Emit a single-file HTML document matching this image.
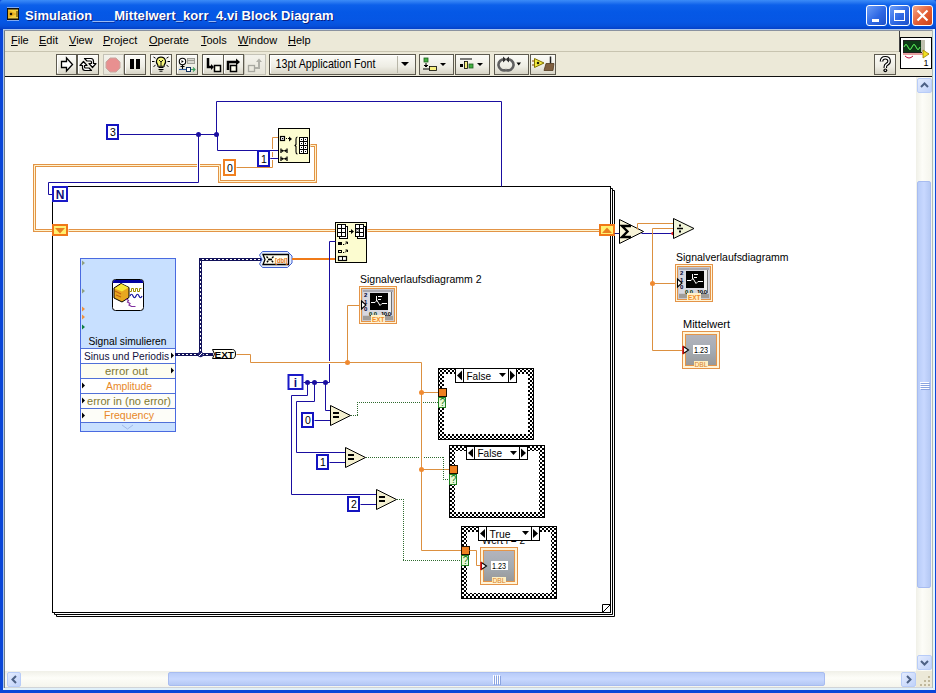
<!DOCTYPE html>
<html><head><meta charset="utf-8">
<style>
*{box-sizing:border-box}
html,body{margin:0;padding:0;width:936px;height:693px;overflow:hidden;background:#fff;font-family:"Liberation Sans",sans-serif}
.abs{position:absolute}
#frame{position:absolute;left:0;top:0;width:936px;height:693px;background:#0A46D8}
#title{position:absolute;left:0;top:0;width:936px;height:30px;
 background:linear-gradient(#3A8CF8 0px,#2B7BF2 2px,#0C60EA 5px,#0558E6 12px,#0656E4 22px,#0650DA 26px,#0440C8 29px,#0036B0 30px);
 border-radius:3px 3px 0 0}
#ttext{position:absolute;left:25px;top:8px;letter-spacing:0.08px;color:#fff;font-weight:bold;font-size:13px;white-space:nowrap;text-shadow:1px 1px 0 #0A1E80}
.tbtn{position:absolute;top:5px;width:21px;height:21px;border:1px solid #fff;border-radius:3px;
 background:linear-gradient(135deg,#6C9EF8,#2E68E4 55%,#1E50C8)}
#menu{position:absolute;left:5px;top:30px;width:927px;height:22px;background:#ECE9D8}
.mi{position:absolute;top:4px;font-size:11px;color:#000;white-space:nowrap}
#tool{position:absolute;left:5px;top:52px;width:927px;height:25px;background:#ECE9D8}
#canvas{position:absolute;left:5px;top:77px;width:911px;height:594px;background:#fff}
#vs{position:absolute;left:916px;top:77px;width:16px;height:594px;background:linear-gradient(90deg,#F0F0E8,#FDFDF8 40%,#F4F4EC)}
#hs{position:absolute;left:5px;top:671px;width:911px;height:17px;background:linear-gradient(#F0F0E8,#FDFDF8 40%,#F4F4EC)}
#grip{position:absolute;left:916px;top:671px;width:16px;height:17px;background:#ECE9D8}
.sbtn{position:absolute;border:1px solid #B8CCF8;border-radius:2px;background:linear-gradient(135deg,#E4ECFE,#C0D2FA)}
.thumb{position:absolute;border:1px solid #A8BCF0;border-radius:2px}
svg{position:absolute;left:0;top:0}
</style></head><body>
<div id="frame"></div>
<div id="title">
 <svg width="14" height="14" style="left:6px;top:7px"><rect x="1" y="1" width="12" height="12" fill="#101010"/><rect x="2" y="2.5" width="10" height="9" fill="#F4D040"/><path d="M2,3 L11,7 L2,11z" fill="#E8B020"/><path d="M11,4 v6" stroke="#403000"/><path d="M5,5.5 l1.5,1.5 l-1.5,1.5 l-1.5,-1.5z" fill="#000"/><path d="M1.5,0.5 h11 M1.5,13.5 h11" stroke="#fff" stroke-dasharray="1,1"/></svg>
 <div id="ttext">Simulation___Mittelwert_korr_4.vi Block Diagram</div>
 <div class="tbtn" style="left:866px"><div class="abs" style="left:5px;top:13px;width:7px;height:3px;background:#fff"></div></div>
 <div class="tbtn" style="left:889px"><div class="abs" style="left:4px;top:4px;width:11px;height:11px;border:1px solid #fff;border-top-width:3px"></div></div>
 <div class="tbtn" style="left:912px;background:linear-gradient(135deg,#F4A888,#E35B32 55%,#CC4418)"><svg width="19" height="19" style="left:0;top:0"><path d="M4.5,4.5 L14.5,14.5 M14.5,4.5 L4.5,14.5" stroke="#fff" stroke-width="2.2"/></svg></div>
</div>
<div id="menu">
 <span class="mi" style="left:6px"><u>F</u>ile</span>
 <span class="mi" style="left:34px"><u>E</u>dit</span>
 <span class="mi" style="left:64px"><u>V</u>iew</span>
 <span class="mi" style="left:98px"><u>P</u>roject</span>
 <span class="mi" style="left:144px"><u>O</u>perate</span>
 <span class="mi" style="left:196px"><u>T</u>ools</span>
 <span class="mi" style="left:233px"><u>W</u>indow</span>
 <span class="mi" style="left:283px"><u>H</u>elp</span>
 <div class="abs" style="left:0;top:21px;width:894px;height:1px;background:#C8C4B0"></div>
 <div class="abs" style="left:894px;top:0;width:1px;height:47px;background:#404040"></div>
</div>
<div id="tool"><div class="abs" style="left:0;top:24px;width:928px;height:1px;background:#101010"></div></div>
<div id="canvas"></div>
<div id="vs">
 <div class="sbtn" style="left:1px;top:1px;width:15px;height:15px"><svg width="13" height="13" style="left:0;top:0"><path d="M3,8 L6.5,4.5 L10,8" fill="none" stroke="#4D6185" stroke-width="2"/></svg></div>
 <div class="thumb" style="left:1px;top:104px;width:14px;height:407px;background:linear-gradient(90deg,#B8CCF8,#C8D8FF 50%,#B4C8F4)"><svg width="10" height="12" style="left:2px;top:199px"><path d="M0,1.5 h9 M0,3.5 h9 M0,5.5 h9 M0,7.5 h9" stroke="#fff"/><path d="M1,2.5 h9 M1,4.5 h9 M1,6.5 h9 M1,8.5 h9" stroke="#8AA4E0"/></svg></div>
 <div class="sbtn" style="left:1px;top:578px;width:15px;height:15px"><svg width="13" height="13" style="left:0;top:0"><path d="M3,5 L6.5,8.5 L10,5" fill="none" stroke="#4D6185" stroke-width="2"/></svg></div>
</div>
<div id="hs">
 <div class="sbtn" style="left:2px;top:1px;width:14px;height:15px"><svg width="13" height="13" style="left:0;top:0"><path d="M8,3 L4.5,6.5 L8,10" fill="none" stroke="#4D6185" stroke-width="2"/></svg></div>
 <div class="thumb" style="left:163px;top:1px;width:657px;height:14px;background:linear-gradient(#B8CCF8,#C8D8FF 50%,#B4C8F4)"><svg width="12" height="10" style="left:323px;top:2px"><path d="M1.5,0 v9 M3.5,0 v9 M5.5,0 v9 M7.5,0 v9" stroke="#fff"/><path d="M2.5,1 v9 M4.5,1 v9 M6.5,1 v9 M8.5,1 v9" stroke="#8AA4E0"/></svg></div>
 <div class="sbtn" style="left:896px;top:1px;width:15px;height:15px"><svg width="13" height="13" style="left:0;top:0"><path d="M5,3 L8.5,6.5 L5,10" fill="none" stroke="#4D6185" stroke-width="2"/></svg></div>
</div>
<div id="grip"><svg width="16" height="17" style="left:0;top:0"><g fill="#C0B89C"><rect x="12" y="5" width="2" height="2"/><rect x="12" y="9" width="2" height="2"/><rect x="12" y="13" width="2" height="2"/><rect x="8" y="9" width="2" height="2"/><rect x="8" y="13" width="2" height="2"/><rect x="4" y="13" width="2" height="2"/></g></svg></div>
<div class="abs" style="left:3px;top:29px;width:1px;height:660px;background:#A8C4EC"></div>
<div class="abs" style="left:4px;top:30px;width:1px;height:658px;background:#707C84"></div>
<div class="abs" style="left:3px;top:29px;width:930px;height:1px;background:#A8C4EC"></div>
<div class="abs" style="left:4px;top:30px;width:928px;height:1px;background:#8A92A0"></div>
<div class="abs" style="left:932px;top:30px;width:1px;height:659px;background:#B0BCB8"></div>
<div class="abs" style="left:933px;top:29px;width:2px;height:660px;background:#E4F6FF"></div>
<div class="abs" style="left:5px;top:687px;width:927px;height:1px;background:#D0D4D8"></div><div class="abs" style="left:3px;top:688px;width:932px;height:2px;background:#E0F0FA"></div>
<svg width="936" height="693" viewBox="0 0 936 693" font-family="Liberation Sans, sans-serif">
<defs>
<linearGradient id="bg" x1="0" y1="0" x2="0" y2="1"><stop offset="0" stop-color="#FCFCF8"/><stop offset=".6" stop-color="#EEEDE4"/><stop offset="1" stop-color="#D6D3C4"/></linearGradient>
<linearGradient id="bgd" x1="0" y1="0" x2="0" y2="1"><stop offset="0" stop-color="#F4F3EC"/><stop offset="1" stop-color="#E6E4D8"/></linearGradient>
<linearGradient id="gind" x1="0" y1="0" x2="0" y2="1"><stop offset="0" stop-color="#b4b4bc"/><stop offset=".5" stop-color="#a4acb4"/><stop offset="1" stop-color="#989898"/></linearGradient>
<pattern id="chk" x="0" y="0" width="4" height="4" patternUnits="userSpaceOnUse"><rect width="4" height="4" fill="#000"/><rect x="0" y="0" width="2" height="2" fill="#fff"/><rect x="2" y="2" width="2" height="2" fill="#fff"/></pattern>
</defs>
<rect x="56.5" y="54.5" width="20" height="20" fill="url(#bg)" stroke="#5e5b50"/>
<path d="M57.5,73 V55.5 H75" fill="none" stroke="#fff"/>
<rect x="77.5" y="54.5" width="21" height="20" fill="url(#bg)" stroke="#5e5b50"/>
<path d="M78.5,73 V55.5 H97" fill="none" stroke="#fff"/>
<rect x="103.5" y="54.5" width="20" height="20" fill="url(#bgd)" stroke="#c4c2b6"/>
<rect x="124.5" y="54.5" width="21" height="20" fill="url(#bg)" stroke="#5e5b50"/>
<path d="M125.5,73 V55.5 H144" fill="none" stroke="#fff"/>
<rect x="150.5" y="54.5" width="21" height="20" fill="url(#bg)" stroke="#5e5b50"/>
<path d="M151.5,73 V55.5 H170" fill="none" stroke="#fff"/>
<rect x="176.5" y="54.5" width="21" height="20" fill="url(#bg)" stroke="#5e5b50"/>
<path d="M177.5,73 V55.5 H196" fill="none" stroke="#fff"/>
<rect x="202.5" y="54.5" width="21" height="20" fill="url(#bg)" stroke="#5e5b50"/>
<path d="M203.5,73 V55.5 H222" fill="none" stroke="#fff"/>
<rect x="223.5" y="54.5" width="20" height="20" fill="url(#bg)" stroke="#5e5b50"/>
<path d="M224.5,73 V55.5 H242" fill="none" stroke="#fff"/>
<rect x="244.5" y="54.5" width="21" height="20" fill="url(#bgd)" stroke="#c4c2b6"/>
<path d="M61.5,61.5 h5 v-3.5 l6,6.5 l-6,6.5 v-3.5 h-5 z" fill="#fff" stroke="#000" stroke-width="1.3"/>
<path d="M84.5,58.5 H91 Q93.5,58.5 93.5,61.5 V63.5 H96 L92.5,67.5 L89,63.5 H91.5 V62 Q91.5,61 90.5,61 H87 Z" fill="#fff" stroke="#000" stroke-width="1.2" stroke-linejoin="round"/>
<path d="M91.5,70.5 H85 Q82.5,70.5 82.5,67.5 V65.5 H80 L83.5,61.5 L87,65.5 H84.5 V67 Q84.5,68 85.5,68 H89 Z" fill="#fff" stroke="#000" stroke-width="1.2" stroke-linejoin="round"/>
<path d="M110,58 h6 l4,4 v6 l-4,4 h-6 l-4,-4 v-6 z" fill="#e89090" stroke="#c8a8a0"/>
<rect x="130" y="59" width="4" height="10" fill="#000"/><rect x="136" y="59" width="4" height="10" fill="#000"/>
<path d="M161,57 a4.6,4.6 0 0 1 3.2,7.9 v1.3 h-6.4 v-1.3 A4.6,4.6 0 0 1 161,57z" fill="#f4f47a" stroke="#000" stroke-width="1.1"/>
<path d="M159,60 l2,2 l2,-2 M161,62 v4" stroke="#000" fill="none" stroke-width=".9"/>
<path d="M158.5,67.5 h5 M158.5,69.5 h5" stroke="#000" stroke-width="1.2"/><path d="M159.5,71.2 h3" stroke="#000" stroke-width="1"/>
<path d="M152,61.5 h2.5 M167.5,61.5 h2.5 M153.5,57 l2,1.2 M168.5,57 l-2,1.2 M153.5,66.5 l2,-1.2 M168.5,66.5 l-2,-1.2" stroke="#000" stroke-width="1"/>
<circle cx="182.5" cy="61.5" r="3.2" fill="#fff" stroke="#000" stroke-width="1.1"/><path d="M181.5,60 l2.2,1.5 l-2.2,1.5z" fill="#000"/><path d="M182.5,64.7 v4.5 M180.5,66.5 h4" stroke="#000" stroke-width="1.1"/>
<rect x="187.5" y="58.5" width="7" height="5" fill="#d8d8d0" stroke="#a0a098"/><path d="M187.5,60.5 h7" stroke="#a0a098"/>
<path d="M179,69.5 h7" stroke="#2a5aa0" stroke-width="1.1"/><rect x="186.5" y="67.5" width="4" height="4" fill="#fff" stroke="#103060"/><path d="M191,69.5 h4 M193,67.5 l2,2 l-2,2" stroke="#40a060" fill="none" stroke-width="1.1"/>
<path d="M208,58 v9 h4" fill="none" stroke="#000" stroke-width="2.5"/><path d="M211,64 l3,3 l-3,3z" fill="#000"/><rect x="214.5" y="65.5" width="6" height="6" fill="#fffff0" stroke="#000" stroke-width="1.5"/>
<path d="M228,70 v-8 h8" fill="none" stroke="#000" stroke-width="2.5"/><path d="M236,58.5 l4,3.5 l-4,3.5z" fill="#000"/><rect x="230.5" y="65.5" width="6" height="6" fill="#fffff0" stroke="#000" stroke-width="1.5"/>
<rect x="248.5" y="65.5" width="6" height="6" fill="none" stroke="#a8a8a0" stroke-width="1.3"/><path d="M255,68 h4 v-6" fill="none" stroke="#b0b0a8" stroke-width="2"/><path d="M256,62 l3,-3.5 l3,3.5z" fill="#b0b0a8"/>
<rect x="269.5" y="54.5" width="146" height="20" fill="url(#bg)" stroke="#5e5b50"/>
<path d="M270.5,73 V55.5 H414" fill="none" stroke="#fff"/>
<path d="M397.5,56 v17" stroke="#b8b6a8"/><path d="M401,62 h8 l-4,4z" fill="#000"/>
<text x="275.5" y="67.5" font-size="12" fill="#000" textLength="100" lengthAdjust="spacingAndGlyphs">13pt Application Font</text>
<rect x="419.5" y="54.5" width="34" height="20" fill="url(#bg)" stroke="#5e5b50"/>
<rect x="424" y="58" width="4" height="4" fill="#40b040" stroke="#206020" stroke-width=".8"/><path d="M426,63 v4 M424,65 l2,2 l2,-2 M423,69 h9" stroke="#000"/><rect x="429.5" y="66.5" width="7" height="4" fill="#f8f080" stroke="#000" stroke-width=".8"/><path d="M440,63 h6 l-3,3z" fill="#000"/>
<rect x="455.5" y="54.5" width="34" height="20" fill="url(#bg)" stroke="#5e5b50"/>
<path d="M460,59 h12" stroke="#000"/><rect x="460" y="64" width="3" height="3" fill="#000"/><rect x="464.5" y="61.5" width="3" height="7" fill="#f8f080" stroke="#000" stroke-width=".8"/><rect x="469" y="64" width="4" height="4" fill="#40b040" stroke="#206020" stroke-width=".8"/><path d="M477,63 h6 l-3,3z" fill="#000"/>
<rect x="494.5" y="54.5" width="34" height="20" fill="url(#bg)" stroke="#5e5b50"/>
<path d="M505,59.5 a5.5,5.5 0 1 0 1,10.5 M507,59.5 a5.5,5.5 0 1 1 -1,10.5" fill="none" stroke="#606060" stroke-width="2.6"/><path d="M503,56.5 l3.5,3 l-3.5,3z M509,56.5 l-3.5,3 l3.5,3z" fill="#303030"/><path d="M516.5,62.5 h4.5 l-2.25,3z" fill="#000"/>
<rect x="530.5" y="54.5" width="25" height="20" fill="url(#bg)" stroke="#5e5b50"/>
<path d="M534.5,58.5 L544,63 L534.5,67.5z" fill="#f4ec40" stroke="#807000"/><path d="M536.5,63 l1.5,-1.5 l1.5,1.5 l-1.5,1.5z" fill="#000"/><path d="M532,61 h2 M532,65 h2" stroke="#804000"/><path d="M550.5,56.5 v7" stroke="#202020" stroke-width="1.5"/><path d="M546,63.5 h8 l-1,7 h-9z" fill="#806040" stroke="#503820" stroke-width=".8"/>
<rect x="874.5" y="54.5" width="21" height="20" fill="url(#bg)" stroke="#5e5b50"/>
<path d="M881.5,61.5 q0,-3.8 3.8,-3.8 q3.8,0 3.8,3.5 q0,2 -2.3,3.2 q-1.5,.8 -1.5,2.5 v1" fill="none" stroke="#000" stroke-width="3.6"/><path d="M881.5,61.5 q0,-3.8 3.8,-3.8 q3.8,0 3.8,3.5 q0,2 -2.3,3.2 q-1.5,.8 -1.5,2.5 v1" fill="none" stroke="#fff" stroke-width="1.4"/><circle cx="885.3" cy="70.3" r="1.9" fill="#000"/><circle cx="885.3" cy="70.3" r=".7" fill="#fff"/>
<rect x="900.5" y="37.5" width="31" height="31" fill="#fff" stroke="#000"/>
<rect x="903.5" y="40.5" width="18" height="12" fill="#0e3a16" stroke="#202020"/><path d="M904,47 q2,-5 4,0 t4,0 t4,0 t4,0" stroke="#60ff60" fill="none"/><rect x="921" y="40" width="4" height="12" fill="#c0c0b0"/><path d="M903,54 h26" stroke="#d04040"/><path d="M923,50 l6,4 l-6,4z" fill="#f0e020" stroke="#a08000" stroke-width=".8"/><path d="M905,56 q4,4 8,0" stroke="#c01040" fill="none"/><text x="928.5" y="66" font-size="9" text-anchor="end" fill="#000">1</text>
<rect x="52.5" y="186.5" width="558" height="426" fill="none" stroke="#000"/>
<path d="M610,188.5 H612.5 V614.5 H54.5 V612" fill="none" stroke="#000"/>
<path d="M612,190.5 H614.5 V616.5 H56.5 V614" fill="none" stroke="#000"/>
<path d="M602.5,612 V604.5 H610 M603,612 L610,605" fill="none" stroke="#000"/>
<path d="M119.5,134.5 L216.5,134.5" fill="none" stroke="#1a0ea0" stroke-width="1" />
<path d="M198.5,134.5 L198.5,182.5 L48.5,182.5 L48.5,194.5 L53.5,194.5" fill="none" stroke="#1a0ea0" stroke-width="1" />
<path d="M216.5,134.5 L216.5,101.5 L501.5,101.5 L501.5,186.5" fill="none" stroke="#1a0ea0" stroke-width="1" />
<path d="M216.5,134.5 L217.5,134.5 L217.5,150.5 L278.5,150.5" fill="none" stroke="#1a0ea0" stroke-width="1" />
<path d="M270.5,158.5 L278.5,158.5" fill="none" stroke="#1a0ea0" stroke-width="1" />
<circle cx="198.5" cy="134.5" r="2.5" fill="#1a0ea0"/>
<circle cx="216.5" cy="134.5" r="2.5" fill="#1a0ea0"/>
<path d="M236.5,167.5 L272.5,167.5 L272.5,137.5 L278.5,137.5" fill="none" stroke="#dc9040" stroke-width="1" />
<path d="M310.5,145.5 L315.5,145.5 L315.5,181.5 L219.5,181.5 L219.5,165.5 L34.5,165.5 L34.5,230.5 L52.5,230.5" fill="none" stroke="#e29446" stroke-width="3" stroke-linejoin="miter"/>
<path d="M310.5,145.5 L315.5,145.5 L315.5,181.5 L219.5,181.5 L219.5,165.5 L34.5,165.5 L34.5,230.5 L52.5,230.5" fill="none" stroke="#fff4d0" stroke-width="1"/>
<path d="M68.5,230.5 L335.5,230.5" fill="none" stroke="#e29446" stroke-width="3" stroke-linejoin="miter"/>
<path d="M68.5,230.5 L335.5,230.5" fill="none" stroke="#fff4d0" stroke-width="1"/>
<path d="M367.5,230.5 L599.5,230.5" fill="none" stroke="#e29446" stroke-width="3" stroke-linejoin="miter"/>
<path d="M367.5,230.5 L599.5,230.5" fill="none" stroke="#fff4d0" stroke-width="1"/>
<rect x="107" y="125" width="11" height="14" fill="#fff" stroke="#1414c0" stroke-width="2"/>
<text x="113.0" y="136" font-size="10.5" text-anchor="middle" fill="#000">3</text>
<rect x="258" y="151" width="11" height="15" fill="#fff" stroke="#1414c0" stroke-width="2"/>
<text x="264.0" y="163" font-size="10.5" text-anchor="middle" fill="#000">1</text>
<rect x="224" y="160" width="11" height="15" fill="#fff" stroke="#f08020" stroke-width="2"/>
<text x="230.0" y="172" font-size="10.5" text-anchor="middle" fill="#000">0</text>
<rect x="278.5" y="128.5" width="31" height="34" fill="#fcfcd0" stroke="#000"/>
<rect x="280.5" y="136.5" width="4" height="4" fill="#fff" stroke="#000" stroke-width="1.2"/><rect x="282" y="138" width="1.2" height="1.2" fill="#000"/><rect x="286" y="138" width="1" height="1" fill="#000"/><path d="M288,138.5 h2" stroke="#000"/><path d="M289,136.5 l3,2.5 l-3,2.5z" fill="#000"/>
<path d="M281,148.5 v4.5 M287,148.5 v4.5" stroke="#000" stroke-width="1.3"/><path d="M281,150.75 h6" stroke="#000"/><path d="M281.5,150.75 l1.5,-1.5 v3z M286.5,150.75 l-1.5,-1.5 v3z" fill="#000"/>
<path d="M281,156.5 v4.5 M287,156.5 v4.5" stroke="#000" stroke-width="1.3"/><path d="M281,158.75 h6" stroke="#000"/><path d="M281.5,158.75 l1.5,-1.5 v3z M286.5,158.75 l-1.5,-1.5 v3z" fill="#000"/>
<path d="M297.5,137 q-1.5,0 -1.5,2 v5.5 l-1,1 l1,1 v5.5 q0,2 1.5,2" fill="none" stroke="#000" stroke-width="1.1"/>
<rect x="299" y="137" width="9" height="17" fill="#000"/>
<rect x="300" y="138" width="3" height="3" fill="#fff"/><rect x="301" y="139" width="1" height="1" fill="#000"/><rect x="300" y="142" width="3" height="3" fill="#fff"/><rect x="301" y="143" width="1" height="1" fill="#000"/><rect x="300" y="146" width="3" height="3" fill="#fff"/><rect x="301" y="147" width="1" height="1" fill="#000"/><rect x="300" y="150" width="3" height="3" fill="#fff"/><rect x="301" y="151" width="1" height="1" fill="#000"/><rect x="304" y="138" width="3" height="3" fill="#fff"/><rect x="305" y="139" width="1" height="1" fill="#000"/><rect x="304" y="142" width="3" height="3" fill="#fff"/><rect x="305" y="143" width="1" height="1" fill="#000"/><rect x="304" y="146" width="3" height="3" fill="#fff"/><rect x="305" y="147" width="1" height="1" fill="#000"/><rect x="304" y="150" width="3" height="3" fill="#fff"/><rect x="305" y="151" width="1" height="1" fill="#000"/>
<rect x="53" y="187" width="14" height="14" fill="#fff" stroke="#1a1ac8" stroke-width="2"/>
<text x="60" y="199" font-size="12" font-weight="bold" text-anchor="middle" fill="#10107a">N</text>
<rect x="53" y="225" width="14" height="10" fill="#fff070" stroke="#f07818" stroke-width="2"/><path d="M55,228 h10 l-5,5.5z" fill="#e88020"/>
<rect x="600" y="225" width="14" height="10" fill="#fff070" stroke="#f07818" stroke-width="2"/><path d="M602,233 h10 l-5,-5.5z" fill="#e88020"/>
<rect x="80.5" y="258.5" width="95" height="173" fill="#c8e0ff" stroke="#4a6ae0"/>
<rect x="112.5" y="279.5" width="31" height="31" rx="3" fill="#fff" stroke="#000"/><path d="M113,283 v-1 q0,-2 2,-2 h26 q2,0 2,2 v1 z" fill="#0000a0"/>
<path d="M121,283.5 L129,287.5 L129,297.5 L122,302 L114,298 L114,288 Z" fill="#e8a820" stroke="#000"/><path d="M121.5,284 L128.5,287.5 L122,291.5 L114.5,288.5 Z" fill="#f8e838"/><path d="M115,291 l6,3 M116,295 l5,2" stroke="#c06010" stroke-width="1.2"/>
<path d="M129.5,291.5 h2 v-3 h2 v3 h2 v-3 h2 v3 h2 v-3 h2" fill="none" stroke="#a09000"/>
<path d="M130,296 q1.5,-3.5 3,0 t3,0 t3,0 t3,0" fill="none" stroke="#1010a0" stroke-width="1.2"/>
<path d="M126,299 l2.5,1.5 l-1,1.5 l2.5,1.5 l-1,1.5 l2.5,1.5 h4" fill="none" stroke="#8030a0" stroke-width="1.2"/>
<path d="M82,260.5 l3,2.5 l-3,2.5z" fill="#90a080"/>
<path d="M82,288.5 l3,2.5 l-3,2.5z" fill="#90a080"/>
<path d="M82,306.5 l3,2.5 l-3,2.5z" fill="#f09040"/>
<path d="M82,314.5 l3,2.5 l-3,2.5z" fill="#f09040"/>
<path d="M82,324.5 l3,2.5 l-3,2.5z" fill="#108040"/>
<text x="127.5" y="345" font-size="11" text-anchor="middle" fill="#000" textLength="78" lengthAdjust="spacingAndGlyphs">Signal simulieren</text>
<path d="M81,348.5 H175" stroke="#5070d8"/>
<path d="M81,363.5 H175" stroke="#5070d8"/>
<path d="M81,378.5 H175" stroke="#5070d8"/>
<path d="M81,393.5 H175" stroke="#5070d8"/>
<path d="M81,408.5 H175" stroke="#5070d8"/>
<path d="M81,422.5 H175" stroke="#5070d8"/>
<rect x="81" y="349" width="94" height="14" fill="#fff"/>
<rect x="81" y="364" width="94" height="14" fill="#fdfdf0"/>
<rect x="81" y="379" width="94" height="14" fill="#fff"/>
<rect x="81" y="394" width="94" height="14" fill="#fdfdf8"/>
<rect x="81" y="409" width="94" height="13" fill="#fdfdf8"/>
<text x="84" y="359.5" font-size="11" fill="#101040" textLength="85" lengthAdjust="spacingAndGlyphs">Sinus und Periodis</text>
<text x="105" y="374.5" font-size="11" fill="#807830" textLength="43" lengthAdjust="spacingAndGlyphs">error out</text>
<text x="106" y="389.5" font-size="11" fill="#e88828" textLength="46" lengthAdjust="spacingAndGlyphs">Amplitude</text>
<text x="87" y="404.5" font-size="11" fill="#807830" textLength="84" lengthAdjust="spacingAndGlyphs">error in (no error)</text>
<text x="104" y="419" font-size="11" fill="#e88828" textLength="50" lengthAdjust="spacingAndGlyphs">Frequency</text>
<path d="M171,352.5 l3,3 l-3,3z" fill="#000"/>
<path d="M171,367.5 l3,3 l-3,3z" fill="#000"/>
<path d="M82,382.5 l3,3 l-3,3z" fill="#000"/>
<path d="M82,397.5 l3,3 l-3,3z" fill="#000"/>
<path d="M82,412.5 l3,3 l-3,3z" fill="#000"/>
<path d="M122,425 l5.5,4 l5.5,-4" fill="none" stroke="#a0b8e8"/>
<path d="M176.5,354.5 L211.5,354.5" fill="none" stroke="#12125a" stroke-width="3" stroke-linecap="square"/>
<path d="M178,354.5 H210" stroke="#fff" stroke-dasharray="2,2"/>
<path d="M200.5,354.5 L200.5,259.5 L262.5,259.5" fill="none" stroke="#12125a" stroke-width="3" stroke-linecap="square"/>
<path d="M200.5,261 V353" stroke="#fff" stroke-dasharray="2,2"/>
<path d="M202,259.5 H261" stroke="#fff" stroke-dasharray="2,2"/>
<circle cx="200.5" cy="354.5" r="2.8" fill="#202070"/><path d="M199,356 l3,-3" stroke="#fff"/>
<path d="M262.5,251.5 H287.5 L292,256 V263 L287.5,267.5 H262.5 L259.5,264 L262,259.5 L259.5,255 Z" fill="#e4eeff" stroke="#4060d0"/>
<path d="M263,254.5 H288.5 V264.5 H263 L265,259.5 Z" fill="#fffff0" stroke="#000" stroke-width="1.3"/>
<path d="M266.5,256.5 l3,3 l-3,3 M273.5,256.5 l-3,3 l3,3 M268,259.5 h4" stroke="#000" fill="none" stroke-width="1.4" stroke-dasharray="2,1"/>
<text x="275" y="263" font-size="8" font-weight="bold" fill="#e07010" textLength="12.5" lengthAdjust="spacingAndGlyphs">[dbl]</text>
<rect x="292" y="258" width="43" height="2" fill="#f07a18"/>
<path d="M212.5,349.5 h20 q3,0 3,4.5 q0,4.5 -3,4.5 h-20 l2,-4.5z" fill="#fffff0" stroke="#000"/>
<text x="214.5" y="357.5" font-size="9.5" font-weight="bold" fill="#000" textLength="19.5" lengthAdjust="spacingAndGlyphs">EXT</text>
<path d="M236.5,354.5 L250.5,354.5 L250.5,362.5 L421.5,362.5 L421.5,550.5 L461.5,550.5" fill="none" stroke="#dc9040" stroke-width="1" />
<path d="M347.5,362.5 L347.5,305.5 L359.5,305.5" fill="none" stroke="#dc9040" stroke-width="1" />
<path d="M421.5,392.5 L438.5,392.5" fill="none" stroke="#dc9040" stroke-width="1" />
<path d="M421.5,469.5 L449.5,469.5" fill="none" stroke="#dc9040" stroke-width="1" />
<circle cx="347.5" cy="362.5" r="2.5" fill="#f08a30"/>
<circle cx="421.5" cy="392.5" r="2.5" fill="#f08a30"/>
<circle cx="421.5" cy="469.5" r="2.5" fill="#f08a30"/>
<rect x="335.5" y="222.5" width="31" height="40" fill="#fcfcd0" stroke="#000"/>
<rect x="339.5" y="226.5" width="8" height="12" fill="#fff" stroke="#000"/>
<rect x="337" y="224" width="9" height="13" fill="#000"/>
<rect x="338" y="225" width="3" height="3" fill="#fff"/>
<rect x="338" y="229" width="3" height="3" fill="#fff"/>
<rect x="338" y="233" width="3" height="3" fill="#fff"/>
<rect x="342" y="225" width="3" height="3" fill="#fff"/>
<rect x="342" y="229" width="3" height="3" fill="#fff"/>
<rect x="342" y="233" width="3" height="3" fill="#fff"/>
<rect x="357.5" y="226.5" width="8" height="12" fill="#fff" stroke="#000"/>
<rect x="355" y="224" width="9" height="13" fill="#000"/>
<rect x="356" y="225" width="3" height="3" fill="#fff"/>
<rect x="356" y="229" width="3" height="3" fill="#fff"/>
<rect x="356" y="233" width="3" height="3" fill="#fff"/>
<rect x="360" y="225" width="3" height="3" fill="#fff"/>
<rect x="360" y="229" width="3" height="3" fill="#fff"/>
<rect x="360" y="233" width="3" height="3" fill="#fff"/>
<path d="M357.5,229 l1.5,1.5 l-1.5,1.5 l-1.5,-1.5z" fill="none" stroke="#000" stroke-width=".8"/>
<path d="M349,231.5 h2" stroke="#000"/><path d="M351,229 l3,2.5 l-3,2.5z" fill="#000"/>
<rect x="338" y="242" width="4" height="3" fill="#000"/><rect x="343" y="244" width="1" height="1" fill="#000"/><path d="M345,244.5 l2.5,-2.5 M345.5,242 h2 v2" stroke="#000" fill="none"/>
<rect x="338.5" y="250.5" width="3" height="2" fill="none" stroke="#000"/><rect x="343" y="252" width="1" height="1" fill="#000"/><path d="M345,252.5 l2.5,-2.5 M345.5,250 h2 v2" stroke="#000" fill="none"/>
<rect x="338.5" y="256.5" width="8" height="4" fill="#fff" stroke="#000" stroke-width="1.2"/><path d="M342.5,256.5 v4" stroke="#000"/>
<text x="360" y="283" font-size="11" fill="#000" textLength="121.5" lengthAdjust="spacingAndGlyphs">Signalverlaufsdiagramm 2</text>
<rect x="359.5" y="286.5" width="37" height="37" fill="#fff4d8" stroke="#e49448"/>
<rect x="361.5" y="288.5" width="33" height="33" fill="#c8c8d0" stroke="#e49448"/>
<rect x="363" y="290" width="30" height="25" fill="#d8d8e0"/>
<rect x="363" y="290" width="30" height="2" fill="#a8a8b0"/>
<rect x="370" y="293" width="18" height="17" fill="#000"/>
<rect x="388" y="292" width="4" height="23" fill="#eeeeee"/><rect x="391" y="292" width="1" height="23" fill="#707070"/>
<path d="M371,302.5 h4 l2,-2 l3,5 l2,-2 h5 M376.5,296 v5 M378,296.5 h4 M378,299.5 h3" stroke="#fff" fill="none" stroke-width="1"/>
<text x="364" y="297" font-size="6" font-weight="bold" fill="#000030">2</text>
<text x="364" y="304" font-size="6" font-weight="bold" fill="#000030">1</text>
<text x="364" y="311" font-size="6" font-weight="bold" fill="#000030">0</text>
<text x="369" y="315.5" font-size="6" font-weight="bold" fill="#003000" textLength="8">0.0</text>
<text x="381" y="315.5" font-size="6" font-weight="bold" fill="#000" textLength="10">10.0</text>
<rect x="363" y="316" width="30" height="4" fill="#a09c98"/>
<rect x="371" y="315" width="14" height="7" fill="#fff0c8"/>
<text x="372" y="321.5" font-size="7" fill="#f08c28" font-weight="bold" textLength="12.5" lengthAdjust="spacingAndGlyphs">EXT</text>
<path d="M361.5,301 L366,305 L361.5,309 Z" fill="#fff" stroke="#000" stroke-width="1.1"/>
<rect x="288.5" y="375" width="14" height="14" fill="#fff" stroke="#1a1ac8" stroke-width="2"/>
<text x="295.5" y="386.5" font-size="12" font-weight="bold" text-anchor="middle" fill="#10107a">i</text>
<path d="M303.5,382.5 L329.5,382.5 L329.5,241.5 L335.5,241.5" fill="none" stroke="#1a0ea0" stroke-width="1" />
<path d="M307.5,382.5 L307.5,395.5 L291.5,395.5 L291.5,494.5 L376.5,494.5" fill="none" stroke="#1a0ea0" stroke-width="1" />
<path d="M314.5,382.5 L314.5,401.5 L296.5,401.5 L296.5,452.5 L345.5,452.5" fill="none" stroke="#1a0ea0" stroke-width="1" />
<path d="M325.5,382.5 L325.5,410.5 L330.5,410.5" fill="none" stroke="#1a0ea0" stroke-width="1" />
<circle cx="307.5" cy="382.5" r="2.5" fill="#1a0ea0"/>
<circle cx="314.5" cy="382.5" r="2.5" fill="#1a0ea0"/>
<circle cx="325.5" cy="382.5" r="2.5" fill="#1a0ea0"/>
<rect x="302" y="413" width="11" height="14" fill="#fff" stroke="#1414c0" stroke-width="2"/>
<text x="308.0" y="424" font-size="10.5" text-anchor="middle" fill="#000">0</text>
<path d="M314.5,420.5 L330.5,420.5" fill="none" stroke="#1a0ea0" stroke-width="1" />
<rect x="317" y="455" width="11" height="14" fill="#fff" stroke="#1414c0" stroke-width="2"/>
<text x="323.0" y="466" font-size="10.5" text-anchor="middle" fill="#000">1</text>
<path d="M329.5,462.5 L345.5,462.5" fill="none" stroke="#1a0ea0" stroke-width="1" />
<rect x="348" y="497" width="11" height="14" fill="#fff" stroke="#1414c0" stroke-width="2"/>
<text x="354.0" y="508" font-size="10.5" text-anchor="middle" fill="#000">2</text>
<path d="M360.5,504.5 L376.5,504.5" fill="none" stroke="#1a0ea0" stroke-width="1" />
<path d="M330.5,405.5 L350.5,415.5 L330.5,425.5 Z" fill="#f4f0d0" stroke="#000"/>
<rect x="333" y="412.0" width="6" height="2" fill="#000"/><rect x="333" y="416.0" width="6" height="2" fill="#000"/>
<path d="M345.5,447.5 L365.5,457.5 L345.5,467.5 Z" fill="#f4f0d0" stroke="#000"/>
<rect x="348" y="454.0" width="6" height="2" fill="#000"/><rect x="348" y="458.0" width="6" height="2" fill="#000"/>
<path d="M376.5,489.5 L396.5,499.5 L376.5,509.5 Z" fill="#f4f0d0" stroke="#000"/>
<rect x="379" y="496.0" width="6" height="2" fill="#000"/><rect x="379" y="500.0" width="6" height="2" fill="#000"/>
<path d="M351,415.5 H358" stroke="#2e6a2e" stroke-dasharray="1,1"/>
<path d="M357.5,402 V416" stroke="#2e6a2e" stroke-dasharray="1,1"/>
<path d="M357,402.5 H439" stroke="#2e6a2e" stroke-dasharray="1,1"/>
<path d="M366,457.5 H444" stroke="#2e6a2e" stroke-dasharray="1,1"/>
<path d="M443.5,457 V480" stroke="#2e6a2e" stroke-dasharray="1,1"/>
<path d="M443,479.5 H450" stroke="#2e6a2e" stroke-dasharray="1,1"/>
<path d="M397,499.5 H404" stroke="#2e6a2e" stroke-dasharray="1,1"/>
<path d="M403.5,499 V561" stroke="#2e6a2e" stroke-dasharray="1,1"/>
<path d="M403,560.5 H462" stroke="#2e6a2e" stroke-dasharray="1,1"/>
<rect x="438" y="368" width="96" height="72" fill="url(#chk)"/>
<rect x="438.5" y="368.5" width="95" height="71" fill="none" stroke="#000"/>
<rect x="444" y="374" width="84" height="60" fill="#fff"/>
<rect x="455.5" y="368.5" width="61" height="14" fill="#fff" stroke="#000"/>
<path d="M463.5,368 V383 M508.5,368 V383" stroke="#000"/>
<path d="M457,375.5 L462,370.5 V380.5 Z" fill="#000"/>
<path d="M515,375.5 L510,370.5 V380.5 Z" fill="#000"/>
<path d="M499,373 h7 l-3.5,4 z" fill="#000"/>
<text x="466.5" y="379.5" font-size="10.5" fill="#000" textLength="24.5" lengthAdjust="spacingAndGlyphs">False</text>
<rect x="438.5" y="388.5" width="8" height="8" fill="#f08020" stroke="#201000" stroke-width="1"/>
<rect x="438.5" y="397.5" width="7" height="10" fill="#e8f8d8" stroke="#208020"/>
<text x="442.5" y="406" font-size="10" text-anchor="middle" fill="#108010">?</text>
<rect x="449" y="445" width="96" height="73" fill="url(#chk)"/>
<rect x="449.5" y="445.5" width="95" height="72" fill="none" stroke="#000"/>
<rect x="455" y="451" width="84" height="61" fill="#fff"/>
<rect x="466.5" y="446.5" width="61" height="13" fill="#fff" stroke="#000"/>
<path d="M474.5,446 V460 M519.5,446 V460" stroke="#000"/>
<path d="M468,453.0 L473,448.5 V457.5 Z" fill="#000"/>
<path d="M526,453.0 L521,448.5 V457.5 Z" fill="#000"/>
<path d="M510,451 h7 l-3.5,4 z" fill="#000"/>
<text x="477.5" y="456.5" font-size="10.5" fill="#000" textLength="24.5" lengthAdjust="spacingAndGlyphs">False</text>
<rect x="449.5" y="465.5" width="8" height="8" fill="#f08020" stroke="#201000" stroke-width="1"/>
<rect x="449.5" y="474.5" width="7" height="10" fill="#e8f8d8" stroke="#208020"/>
<text x="453.5" y="483" font-size="10" text-anchor="middle" fill="#108010">?</text>
<rect x="461" y="526" width="96" height="73" fill="url(#chk)"/>
<rect x="461.5" y="526.5" width="95" height="72" fill="none" stroke="#000"/>
<rect x="467" y="532" width="84" height="61" fill="#fff"/>
<rect x="478.5" y="526.5" width="61" height="14" fill="#fff" stroke="#000"/>
<path d="M486.5,526 V541 M531.5,526 V541" stroke="#000"/>
<path d="M480,533.5 L485,528.5 V538.5 Z" fill="#000"/>
<path d="M538,533.5 L533,528.5 V538.5 Z" fill="#000"/>
<path d="M522,531 h7 l-3.5,4 z" fill="#000"/>
<text x="489.5" y="537.5" font-size="10.5" fill="#000" textLength="21" lengthAdjust="spacingAndGlyphs">True</text>
<text x="482" y="544" font-size="11" fill="#000" textLength="43" lengthAdjust="spacingAndGlyphs">Wert i = 2</text>
<rect x="478.5" y="526.5" width="61" height="14" fill="#fff" stroke="#000"/>
<path d="M486.5,526 V541 M531.5,526 V541" stroke="#000"/><path d="M480,533.5 L485,529 V538 Z M538,533.5 L533,529 V538 Z M522,531 h7 l-3.5,4z" fill="#000"/>
<text x="489.5" y="537.5" font-size="10.5" fill="#000" textLength="21" lengthAdjust="spacingAndGlyphs">True</text>
<rect x="461.5" y="546.5" width="8" height="8" fill="#f08020" stroke="#201000" stroke-width="1"/>
<rect x="461.5" y="555.5" width="7" height="10" fill="#e8f8d8" stroke="#208020"/>
<text x="465.5" y="564" font-size="10" text-anchor="middle" fill="#108010">?</text>
<path d="M469.5,550.5 L476.5,550.5 L476.5,565.5 L481.5,565.5" fill="none" stroke="#dc9040" stroke-width="1" />
<rect x="480.5" y="547.5" width="37" height="37" fill="#fff4d8" stroke="#e49448"/>
<rect x="483.5" y="550.5" width="31" height="31" fill="url(#gind)" stroke="#e49448"/>
<rect x="491" y="561" width="17" height="9" fill="#fff"/>
<text x="492" y="569" font-size="9.5" fill="#000" textLength="14" lengthAdjust="spacingAndGlyphs">1.23</text>
<rect x="492" y="577" width="14" height="6" fill="#fff0c0"/>
<text x="492.5" y="582.5" font-size="6.5" fill="#d88030" textLength="13" lengthAdjust="spacingAndGlyphs">DBL</text>
<path d="M481.5,562.5 L486.5,566 L481.5,569.5 Z" fill="#fff" stroke="#000" stroke-width="1.1"/><path d="M481,562 v8" stroke="#e01010" stroke-width="1.5"/>
<path d="M619.5,219.5 L643.5,231.5 L619.5,243.5 Z" fill="#f8f4d8" stroke="#000"/>
<path d="M631,226 H622 L627.5,231.5 L622,237 H631" fill="none" stroke="#000" stroke-width="2.4" stroke-linejoin="miter"/>
<path d="M614.5,233.5 L619.5,233.5" fill="none" stroke="#202080" stroke-width="1" />
<path d="M637.5,223.5 L673.5,223.5" fill="none" stroke="#dc9040" stroke-width="1" />
<path d="M637.5,223.5 L637.5,229.5" fill="none" stroke="#dc9040" stroke-width="1" />
<path d="M641.5,233.5 L673.5,233.5" fill="none" stroke="#1a0ea0" stroke-width="1" />
<circle cx="673" cy="233.5" r="1.8" fill="#e02020"/>
<path d="M652.5,228.5 L673.5,228.5" fill="none" stroke="#dc9040" stroke-width="1" />
<path d="M652.5,228.5 L652.5,350.5 L683.5,350.5" fill="none" stroke="#dc9040" stroke-width="1" />
<path d="M652.5,283.5 L675.5,283.5" fill="none" stroke="#dc9040" stroke-width="1" />
<circle cx="652.5" cy="283.5" r="2.5" fill="#f08a30"/>
<path d="M673.5,218.5 L694,228.5 L673.5,238.5 Z" fill="#f0f4d8" stroke="#000"/>
<path d="M677,228.5 h6" stroke="#000" stroke-width="1.5"/><rect x="679" y="224.5" width="2" height="2" fill="#000"/><rect x="679" y="230.5" width="2" height="2" fill="#000"/>
<text x="676" y="261" font-size="11" fill="#000" textLength="112.5" lengthAdjust="spacingAndGlyphs">Signalverlaufsdiagramm</text>
<rect x="675.5" y="264.5" width="37" height="37" fill="#fff4d8" stroke="#e49448"/>
<rect x="677.5" y="266.5" width="33" height="33" fill="#c8c8d0" stroke="#e49448"/>
<rect x="679" y="268" width="30" height="25" fill="#d8d8e0"/>
<rect x="679" y="268" width="30" height="2" fill="#a8a8b0"/>
<rect x="686" y="271" width="18" height="17" fill="#000"/>
<rect x="704" y="270" width="4" height="23" fill="#eeeeee"/><rect x="707" y="270" width="1" height="23" fill="#707070"/>
<path d="M687,280.5 h4 l2,-2 l3,5 l2,-2 h5 M692.5,274 v5 M694,274.5 h4 M694,277.5 h3" stroke="#fff" fill="none" stroke-width="1"/>
<text x="680" y="275" font-size="6" font-weight="bold" fill="#000030">2</text>
<text x="680" y="282" font-size="6" font-weight="bold" fill="#000030">1</text>
<text x="680" y="289" font-size="6" font-weight="bold" fill="#000030">0</text>
<text x="685" y="293.5" font-size="6" font-weight="bold" fill="#003000" textLength="8">0.0</text>
<text x="697" y="293.5" font-size="6" font-weight="bold" fill="#000" textLength="10">10.0</text>
<rect x="679" y="294" width="30" height="4" fill="#a09c98"/>
<rect x="687" y="293" width="14" height="7" fill="#fff0c8"/>
<text x="688" y="299.5" font-size="7" fill="#f08c28" font-weight="bold" textLength="12.5" lengthAdjust="spacingAndGlyphs">EXT</text>
<path d="M677.5,279 L682,283 L677.5,287 Z" fill="#fff" stroke="#000" stroke-width="1.1"/>
<text x="683" y="327.5" font-size="11" fill="#000" textLength="47" lengthAdjust="spacingAndGlyphs">Mittelwert</text>
<rect x="682.5" y="331.5" width="37" height="37" fill="#fff4d8" stroke="#e49448"/>
<rect x="685.5" y="334.5" width="31" height="31" fill="url(#gind)" stroke="#e49448"/>
<rect x="693" y="345" width="17" height="9" fill="#fff"/>
<text x="694" y="353" font-size="9.5" fill="#000" textLength="14" lengthAdjust="spacingAndGlyphs">1.23</text>
<rect x="694" y="361" width="14" height="6" fill="#fff0c0"/>
<text x="694.5" y="366.5" font-size="6.5" fill="#d88030" textLength="13" lengthAdjust="spacingAndGlyphs">DBL</text>
<path d="M683.5,346.5 L688.5,350 L683.5,353.5 Z" fill="#fff" stroke="#000" stroke-width="1.1"/><path d="M683,346 v8" stroke="#e01010" stroke-width="1.5"/>
<rect x="197" y="164" width="3" height="3" fill="#fff"/>
<path d="M198.5,162.5 L198.5,168.5" fill="none" stroke="#1a0ea0" stroke-width="1" />
<rect x="272" y="149" width="1" height="3" fill="#fff"/>
<path d="M270.5,150.5 L275.5,150.5" fill="none" stroke="#1a0ea0" stroke-width="1" />
<rect x="272" y="157" width="1" height="3" fill="#fff"/>
<path d="M270.5,158.5 L275.5,158.5" fill="none" stroke="#1a0ea0" stroke-width="1" />
<rect x="329" y="361" width="1" height="3" fill="#fff"/>
<path d="M326.5,362.5 L333.5,362.5" fill="none" stroke="#dc9040" stroke-width="1" />
<rect x="420" y="402" width="3" height="1" fill="#fff"/>
<path d="M421.5,399.5 L421.5,405.5" fill="none" stroke="#dc9040" stroke-width="1" />
<rect x="420" y="457" width="3" height="1" fill="#fff"/>
<path d="M421.5,454.5 L421.5,460.5" fill="none" stroke="#dc9040" stroke-width="1" />
</svg>
</body></html>
